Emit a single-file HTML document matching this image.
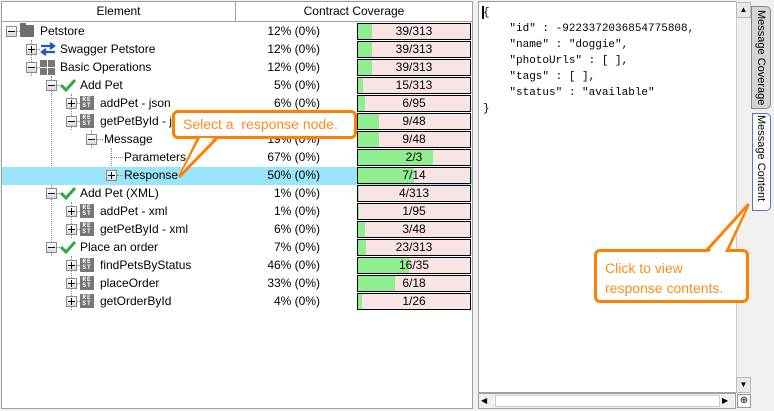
<!DOCTYPE html>
<html><head><meta charset="utf-8"><style>
*{margin:0;padding:0;box-sizing:border-box}
body{width:774px;height:411px;background:#f0f0f0;font-family:"Segoe UI","Liberation Sans",sans-serif;font-size:12px;color:#000;position:relative;overflow:hidden}
.a{position:absolute}
.left{left:1px;top:1px;width:472px;height:408px;background:#fff;border:1px solid #a0a0a0}
.hdr{top:0;height:20px;background:#fff;border-bottom:1px solid #a0a0a0;text-align:center;line-height:19px}
.row{left:0;width:470px;height:18px}
.t{top:1px;line-height:16px;white-space:nowrap}
.pct{right:152px;top:1px;line-height:16px}
.bar{left:355px;top:1px;width:114px;height:17px;border:1px solid #000;background:#f9e4e4;text-align:center;line-height:15px;overflow:hidden}
.bar i{position:absolute;left:0;top:0;bottom:0;background:#90ee90}
.bar span{position:relative}
.ex{width:11px;height:11px;border:1px solid #8a8a8a;background:linear-gradient(#fff,#d8d8d8);top:4px}
.ex:before{content:"";position:absolute;left:1px;top:4px;width:7px;height:1px;background:#000}
.ex.p:after{content:"";position:absolute;left:4px;top:1px;width:1px;height:7px;background:#000}
.rest{width:14px;height:14px;background:#777;top:2px;color:#fff;font-size:6px;line-height:6px;font-family:"Liberation Mono",monospace;font-weight:bold;text-align:center;padding-top:1px;letter-spacing:1px}
.dh{height:1px;border-top:1px dotted #888;top:9px}
.dv{width:1px;border-left:1px dotted #888}
.code{font-family:"Courier New","Liberation Mono",monospace;font-size:11px;line-height:16px;white-space:pre}
.call{border:3px solid #ff7f00;border-radius:6px;background:#fff;color:#ff8c1a;font-size:14px}
.vt{writing-mode:vertical-rl;font-size:11px;line-height:16px;white-space:nowrap;overflow:hidden}
</style></head><body>
<div class="a left">
<div class="a hdr" style="left:0;width:234px;border-right:1px solid #a0a0a0">Element</div>
<div class="a hdr" style="left:234px;width:236px">Contract Coverage</div>
<div class="a dv" style="left:29px;top:38px;height:36px"></div>
<div class="a dv" style="left:49px;top:74px;height:180px"></div>
<div class="a dv" style="left:69px;top:92px;height:36px"></div>
<div class="a dv" style="left:89px;top:128px;height:18px"></div>
<div class="a dv" style="left:109px;top:146px;height:18px"></div>
<div class="a dv" style="left:69px;top:200px;height:36px"></div>
<div class="a dv" style="left:69px;top:254px;height:54px"></div>
<div class="a" style="left:0;top:165px;width:470px;height:18px;background:#99e5fb"></div>
</div>

<div id="rows"></div>

<div class="a" style="left:478px;top:1px;width:259px;height:392px;background:#fff;border:1px solid #a0a0a0"></div>
<div class="a code" style="left:483px;top:5px">{
    "id" : -9223372036854775808,
    "name" : "doggie",
    "photoUrls" : [ ],
    "tags" : [ ],
    "status" : "available"
}</div>
<div class="a" style="left:482px;top:6px;width:2px;height:13px;background:#000"></div>
<div class="a" style="left:736px;top:1px;width:15px;height:392px;background:#f0f0f0;border-left:1px solid #ccc"></div>
<div class="a" style="left:736px;top:2px;width:15px;height:16px;background:#e8e8e8;border:1px solid #bbb;text-align:center;font-size:8px;line-height:14px">▲</div>
<div class="a" style="left:736px;top:377px;width:15px;height:16px;background:#e8e8e8;border:1px solid #bbb;text-align:center;font-size:8px;line-height:14px">▼</div>
<div class="a" style="left:478px;top:393px;width:258px;height:16px;background:#f0f0f0;border:1px solid #a0a0a0"></div>
<div class="a" style="left:481px;top:395px;width:12px;height:12px;font-size:8px;line-height:12px">◀</div>
<div class="a" style="left:495px;top:395px;width:225px;height:12px;background:#fff;border:1px solid #ccc"></div>
<div class="a" style="left:722px;top:395px;width:12px;height:12px;font-size:8px;line-height:12px">▶</div>
<div class="a" style="left:737px;top:394px;width:14px;height:14px;border:1px solid #999;background:#fff;font-size:10px;line-height:12px;text-align:center">⊕</div>

<div class="a" style="left:751px;top:6px;width:20px;height:103px;background:#d4d4d4;border:1px solid #888;border-radius:0 5px 5px 0"></div>
<div class="a vt" style="left:753px;top:10px;width:16px;height:97px">Message Coverage</div>
<div class="a" style="left:752px;top:113px;width:19px;height:98px;background:#fff;border:1px solid #5577bb;border-radius:0 5px 5px 0"></div>
<div class="a vt" style="left:753px;top:115px;width:16px;height:94px">Message Content</div>

<svg class="a" style="left:0;top:0" width="774" height="411">
<polygon points="198,139 180,176 216,139" fill="#fff" stroke="#ff7f00" stroke-width="3" stroke-linejoin="round"/>
<polygon points="706,251 748,205 727,251" fill="#fff" stroke="#ff7f00" stroke-width="3" stroke-linejoin="round"/>
</svg>
<div class="a call" style="left:172px;top:110px;width:185px;height:29px;line-height:23px;padding-left:8px">Select a&nbsp; response node.</div>
<div class="a call" style="left:594px;top:249px;width:155px;height:54px;line-height:20px;padding:6px 0 0 8px">Click to view<br>response contents.</div>
<svg class="a" style="left:0;top:0" width="774" height="411">
<polygon points="200,138 182,172 214,138" fill="#fff"/>
<polygon points="709,252 745,210 725,252" fill="#fff"/>
</svg>

<script>
var R=[
[0,'-','folder','Petstore','12% (0%)',39,313],
[1,'+','sw','Swagger Petstore','12% (0%)',39,313],
[1,'-','grid','Basic Operations','12% (0%)',39,313],
[2,'-','chk','Add Pet','5% (0%)',15,313],
[3,'+','rest','addPet - json','6% (0%)',6,95],
[3,'-','rest','getPetById - json','19% (0%)',9,48],
[4,'-','','Message','19% (0%)',9,48],
[5,'','','Parameters','67% (0%)',2,3],
[5,'+','','Response','50% (0%)',7,14],
[2,'-','chk','Add Pet (XML)','1% (0%)',4,313],
[3,'+','rest','addPet - xml','1% (0%)',1,95],
[3,'+','rest','getPetById - xml','6% (0%)',3,48],
[2,'-','chk','Place an order','7% (0%)',23,313],
[3,'+','rest','findPetsByStatus','46% (0%)',16,35],
[3,'+','rest','placeOrder','33% (0%)',6,18],
[3,'+','rest','getOrderById','4% (0%)',1,26]];
var h='';
R.forEach(function(r,i){
 var y=22+i*18, L=r[0], ex=4+20*L, ix=ex+14, tx=ix+20;
 if(L==4)tx=102; if(L==5)tx=122;
 h+='<div class="a row" style="left:2px;top:'+y+'px">';
 if(r[1]) h+='<div class="a ex'+(r[1]=='+'?' p':'')+'" style="left:'+ex+'px"></div>';
 var ds=r[1]?ex+11:ex+4;
 var de=r[2]?ix:tx-1;
 if(L==5&&!r[1]){ds=108;}
 h+='<div class="a dh" style="left:'+ds+'px;width:'+(de-ds)+'px"></div>';
 if(r[2]=='folder') h+='<div class="a" style="left:'+ix+'px;top:3px;width:14px;height:12px;background:#6d6d6d;border-radius:1px"></div><div class="a" style="left:'+ix+'px;top:1px;width:6px;height:3px;background:#6d6d6d"></div>';
 if(r[2]=='sw') h+='<svg class="a" style="left:'+ix+'px;top:2px" width="16" height="14"><path d="M1 4H13M10 1L14 4L10 7" stroke="#1a5bb5" stroke-width="2.2" fill="none"/><path d="M15 10H3M6 7L2 10L6 13" stroke="#1a5bb5" stroke-width="2.2" fill="none"/></svg>';
 if(r[2]=='grid') h+='<svg class="a" style="left:'+ix+'px;top:2px" width="15" height="15"><rect x="0" y="0" width="7" height="7" fill="#777"/><rect x="8" y="0" width="7" height="7" fill="#777"/><rect x="0" y="8" width="7" height="7" fill="#777"/><rect x="8" y="8" width="7" height="7" fill="#777"/></svg>';
 if(r[2]=='chk') h+='<svg class="a" style="left:'+ix+'px;top:2px" width="16" height="14"><path d="M1 7L6 12L15 2" stroke="#2eaa3e" stroke-width="3" fill="none"/></svg>';
 if(r[2]=='rest') h+='<div class="a rest" style="left:'+ix+'px">RE<br>ST</div>';
 h+='<div class="a t" style="left:'+tx+'px">'+r[3]+'</div>';
 h+='<div class="a pct">'+r[4]+'</div>';
 h+='<div class="a bar"><i style="width:'+Math.round(112*r[5]/r[6])+'px"></i><span>'+r[5]+'/'+r[6]+'</span></div>';
 h+='</div>';
});
document.getElementById('rows').outerHTML=h;
</script>
</body></html>
